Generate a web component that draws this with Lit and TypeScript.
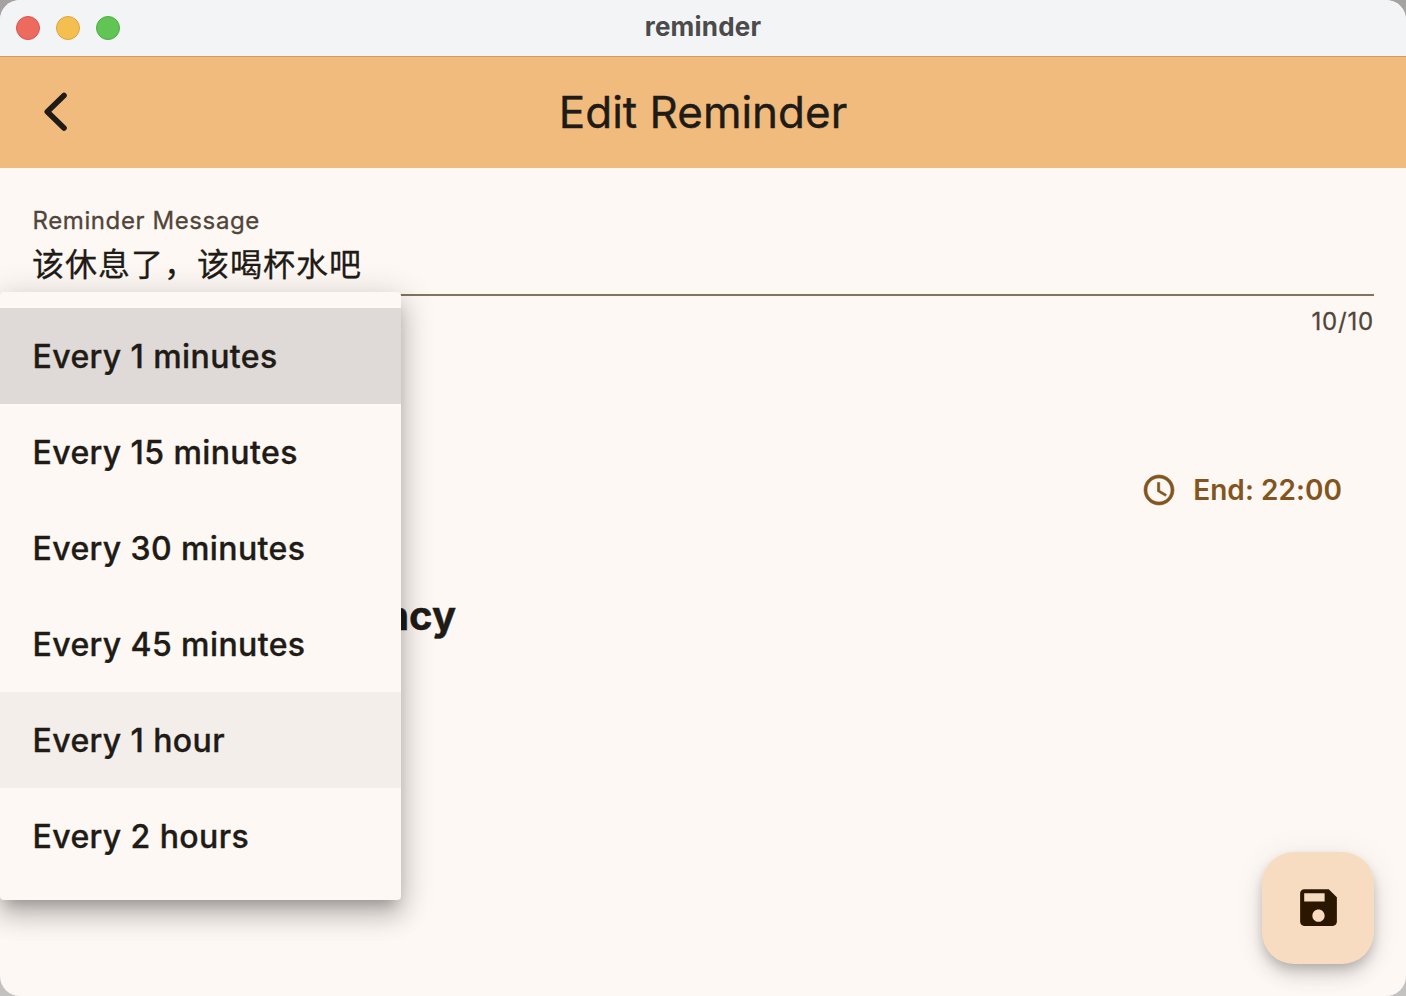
import { LitElement, html, css } from "lit";
import { customElement, property, state } from "lit/decorators.js";
import { classMap } from "lit/directives/class-map.js";

@customElement("frequency-menu")
class FrequencyMenu extends LitElement {
  @property({ type: Array }) options: string[] = [];
  @property({ type: Number }) selected = 0;
  @property({ type: Number }) hovered = -1;

  static styles = css`
    :host {
      display: block;
    }
    .menu {
      box-sizing: border-box;
      width: 401px;
      padding: 16px 0;
      background: #fef8f4;
      border-radius: 4px;
      box-shadow:
        0 10px 13px -6px rgba(0, 0, 0, 0.22),
        0 16px 24px 2px rgba(0, 0, 0, 0.15),
        0 6px 34px 4px rgba(0, 0, 0, 0.14);
    }
    .item {
      display: flex;
      align-items: center;
      height: 96px;
      padding: 1px 0 0 32.5px;
      box-sizing: border-box;
      font-size: 32px;
      font-weight: 500;
      letter-spacing: 0.4px;
      -webkit-text-stroke: 0.35px currentColor;
      white-space: nowrap;
    }
    .selected {
      background: #dfdad7;
    }
    .hovered {
      background: #f3eeea;
    }
  `;

  render() {
    return html`<div class="menu">
      ${this.options.map(
        (label, i) => html`<div
          class=${classMap({ item: true, selected: i === this.selected, hovered: i === this.hovered })}
        >
          ${label}
        </div>`
      )}
    </div>`;
  }
}

@customElement("app-root")
class AppRoot extends LitElement {
  @state() private message = "该休息了，该喝杯水吧";
  private options = [
    "Every 1 minutes",
    "Every 15 minutes",
    "Every 30 minutes",
    "Every 45 minutes",
    "Every 1 hour",
    "Every 2 hours",
  ];

  static styles = css`
    :host {
      display: block;
      height: 996px;
      background: linear-gradient(#a5a3a2, #c4c2c1);
      font-family: Inter, "Noto Sans CJK SC", sans-serif;
      color: #1f1b16;
    }
    .window {
      position: relative;
      display: flex;
      flex-direction: column;
      height: 100%;
      border-radius: 20px;
      overflow: hidden;
      background: #fef8f4;
    }
    .titlebar {
      display: grid;
      grid-template-columns: 1fr auto 1fr;
      align-items: center;
      height: 56px;
      padding: 0 16px;
      background: #f3f4f6;
    }
    .lights {
      display: flex;
      gap: 16px;
    }
    .light {
      box-sizing: border-box;
      width: 24px;
      height: 24px;
      border-radius: 50%;
      border: 1px solid;
    }
    .close {
      background: #ed6a5f;
      border-color: #d8564d;
    }
    .minimise {
      background: #f5bf4f;
      border-color: #dca53f;
    }
    .zoom {
      background: #61c555;
      border-color: #4cae3e;
    }
    .app-name {
      font-size: 26px;
      font-weight: 700;
      line-height: 32px;
      letter-spacing: 0.2px;
      color: #4b4b4b;
      padding-bottom: 2px;
    }
    .appbar {
      display: grid;
      grid-template-columns: 1fr auto 1fr;
      align-items: center;
      box-sizing: border-box;
      height: 112px;
      padding: 0 32px 2px;
      background: #f2bb7e;
      border-top: 1px solid #d29a60;
    }
    .back {
      display: block;
      width: 48px;
      height: 48px;
    }
    .title {
      font-size: 44px;
      line-height: 56px;
      -webkit-text-stroke: 0.4px currentColor;
    }
    .content {
      flex: 1;
      display: flex;
      flex-direction: column;
      padding: 37px 32px 32px;
    }
    .field {
      display: flex;
      flex-direction: column;
      height: 89px;
      border-bottom: 2px solid #80765f;
    }
    .label {
      font-size: 24px;
      line-height: 32px;
      letter-spacing: 0.6px;
      padding-left: 0.5px;
      color: #50453a;
      -webkit-text-stroke: 0.3px currentColor;
    }
    .value {
      font-size: 32px;
      line-height: 48px;
      letter-spacing: 1px;
      padding-top: 4px;
      -webkit-text-stroke: 0.3px currentColor;
    }
    .counter {
      align-self: flex-end;
      margin-top: 10px;
      font-size: 24px;
      line-height: 32px;
      letter-spacing: 0.8px;
      color: #50453a;
      -webkit-text-stroke: 0.3px currentColor;
    }
    .end {
      display: flex;
      justify-content: flex-end;
      align-items: center;
      gap: 16px;
      height: 40px;
      margin-top: 132px;
      padding-right: 32px;
      color: #825520;
      font-size: 28px;
      font-weight: 600;
      letter-spacing: 0.05px;
    }
    .clock {
      width: 36px;
      height: 36px;
      stroke: currentColor;
      stroke-width: 0.4;
    }
    .heading {
      width: 424px;
      margin-top: 80px;
      font-size: 40px;
      line-height: 52px;
      font-weight: 700;
      -webkit-text-stroke: 0.4px currentColor;
      text-align: right;
    }
    .fab {
      display: flex;
      align-items: center;
      justify-content: center;
      align-self: flex-end;
      box-sizing: border-box;
      width: 112px;
      height: 112px;
      padding: 0 0 1px 0;
      margin-top: auto;
      border-radius: 32px;
      background: #f8dcc2;
      box-shadow:
        0 6px 12px -2px rgba(0, 0, 0, 0.2),
        0 12px 20px 0 rgba(0, 0, 0, 0.12),
        0 2px 36px 0 rgba(0, 0, 0, 0.06);
    }
    .save {
      width: 49px;
      height: 49px;
    }
    .popup {
      position: absolute;
      left: 0;
      top: 292px;
    }
  `;

  render() {
    return html`
      <div class="window">
        <div class="titlebar">
          <div class="lights">
            <span class="light close"></span>
            <span class="light minimise"></span>
            <span class="light zoom"></span>
          </div>
          <div class="app-name">reminder</div>
        </div>
        <div class="appbar">
          <svg class="back" viewBox="0 0 48 48" fill="none" stroke="#1f1b16" stroke-width="5.6">
            <path
              d="M32 7.4 L15.3 23.7 L32 40"
              stroke-linecap="round"
              stroke-linejoin="round"
            />
          </svg>
          <div class="title">Edit Reminder</div>
        </div>
        <div class="content">
          <div class="field">
            <div class="label">Reminder Message</div>
            <div class="value">${this.message}</div>
          </div>
          <div class="counter">10/10</div>
          <div class="end">
            <svg class="clock" viewBox="0 0 24 24" fill="currentColor">
              <path
                d="M11.99 2C6.47 2 2 6.48 2 12s4.47 10 9.99 10C17.52 22 22 17.52 22 12S17.52 2 11.99 2zM12 20c-4.42 0-8-3.58-8-8s3.58-8 8-8 8 3.58 8 8-3.58 8-8 8zm.5-13H11v6l5.25 3.15.75-1.23-4.5-2.67z"
              />
            </svg>
            <span class="end-text">End: 22:00</span>
          </div>
          <div class="heading">Reminder Frequency</div>
          <div class="fab">
            <svg class="save" viewBox="0 0 24 24" fill="#2b1700">
              <path
                d="M17 3H5c-1.11 0-2 .9-2 2v14c0 1.1.89 2 2 2h14c1.1 0 2-.9 2-2V7l-4-4zm-5 16c-1.66 0-3-1.34-3-3s1.34-3 3-3 3 1.34 3 3-1.34 3-3 3zm3-10H5V5h10v4z"
              />
            </svg>
          </div>
        </div>
        <frequency-menu class="popup" .options=${this.options} .selected=${0} .hovered=${4}></frequency-menu>
      </div>
    `;
  }
}
